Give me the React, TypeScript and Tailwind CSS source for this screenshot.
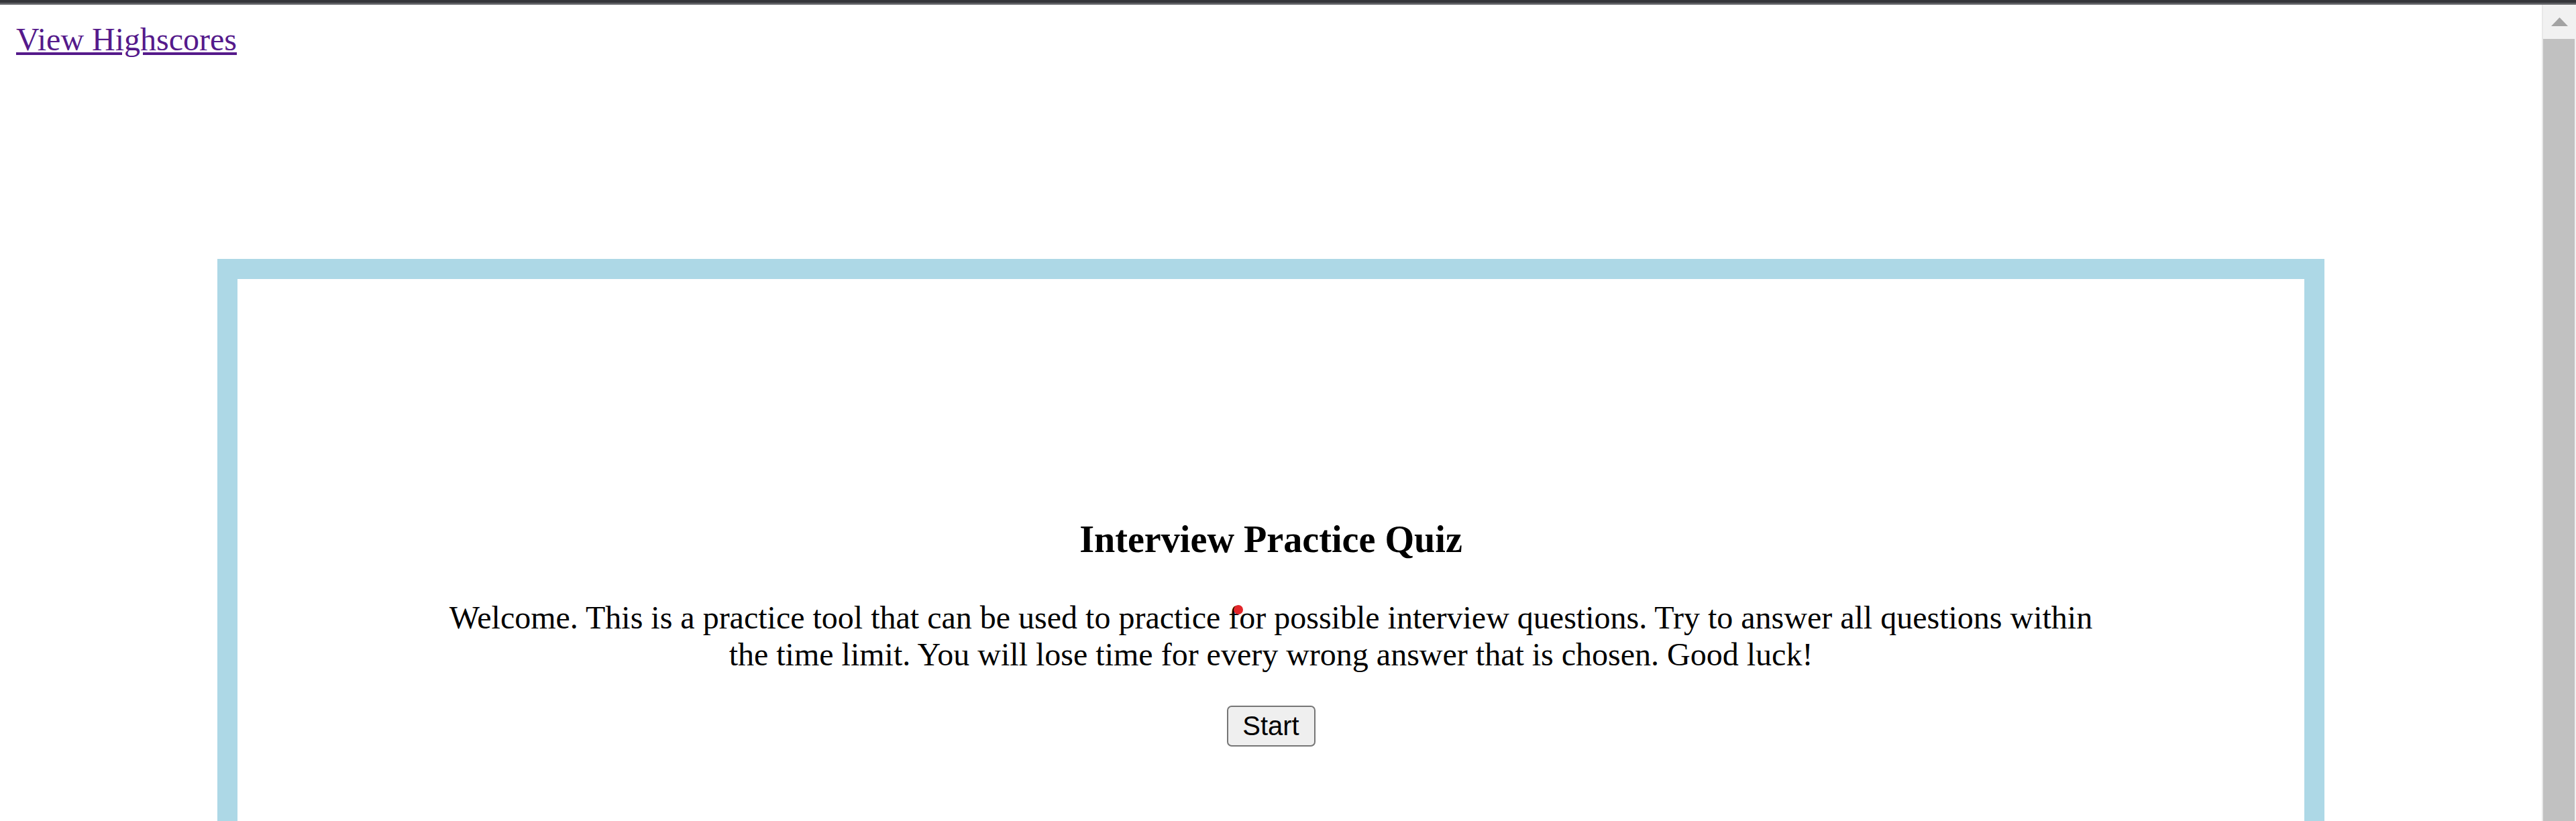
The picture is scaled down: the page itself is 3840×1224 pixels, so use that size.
const App = () => {
  return (
    <div className="h-[1224px] w-full overflow-hidden flex flex-col bg-white">
      {/* window top edge */}
      <div className="h-[4px] bg-[#35363a]" />
      <div className="h-[3px] bg-[#5f6064]" />

      <div className="flex-1 flex flex-row min-h-0">
        <main className="relative flex-1 min-w-0 overflow-hidden px-[24px] pt-[24px] font-['Liberation_Serif',serif] text-[48px] leading-[55.2px] text-black">
          <div>
            <a href="#" className="text-[#551a8b] underline">
              View Highscores
            </a>
          </div>

          <div className="mx-[300px] mt-[300px] border-[30px] border-[#add8e6] p-[300px] text-center">
            <h3 className="my-[56.16px] text-[56.16px] font-bold leading-[64.6px]">
              Interview Practice Quiz
            </h3>
            <p className="my-[48px]">
              Welcome. This is a practice tool that can be used to practice for
              possible interview questions. Try to answer all questions within
              the time limit. You will lose time for every wrong answer that is
              chosen. Good luck!
            </p>
            <button className="inline-flex h-[61px] w-[132px] items-center justify-center rounded-[7px] border-[2px] border-[#767676] bg-[#efefef] font-['Liberation_Sans',Arial,sans-serif] text-[40px] leading-none text-black">
              Start
            </button>
          </div>

          {/* cursor dot */}
          <div className="absolute left-[1839px] top-[895px] h-[14px] w-[14px] rounded-full bg-[#e3262a]" />
        </main>

        {/* scrollbar */}
        <div className="w-[51px] flex flex-col bg-[#f1f1f1] border-l-[2px] border-[#e8e8e8]">
          <div className="h-[51px] flex items-center justify-center">
            <svg width="25" height="13" viewBox="0 0 25 13">
              <polygon points="12.5,0 25,13 0,13" fill="#a3a3a3" />
            </svg>
          </div>
          <div className="flex-1 mr-[2px] bg-[#c1c1c1]" />
        </div>
      </div>
    </div>
  );
};

export default App;
